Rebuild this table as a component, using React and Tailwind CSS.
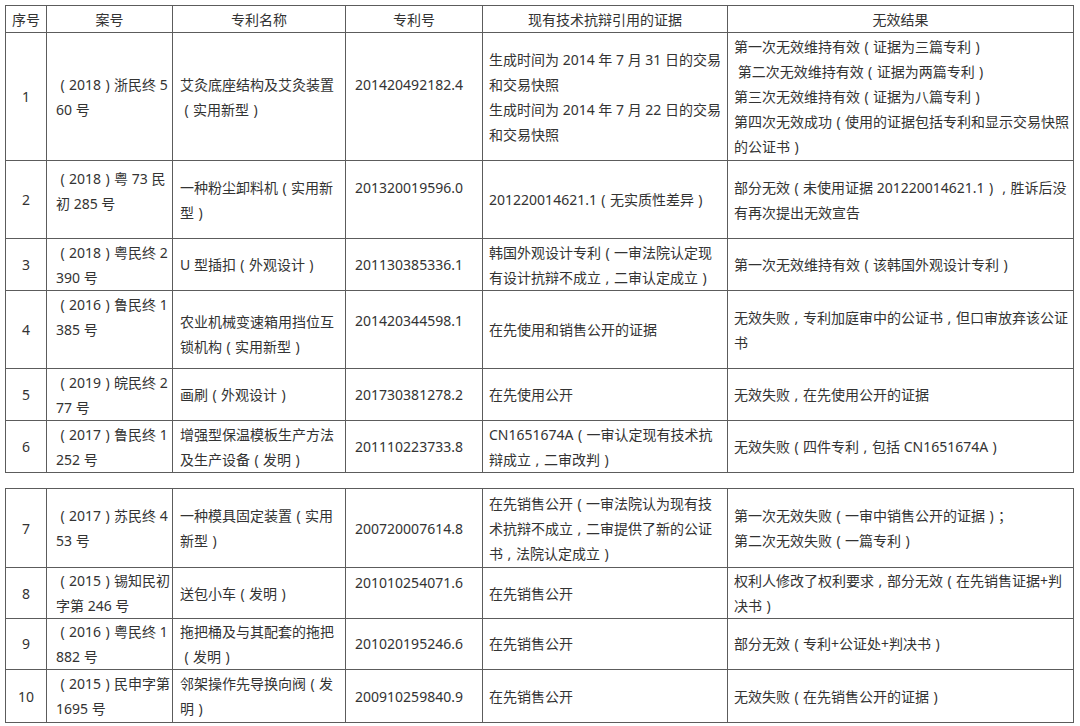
import React from 'react';

// column template shared by header and all rows
const COLS = 'grid grid-cols-[41px_126px_173px_137px_245px_346px]';

// left padding per column
const PAD = ['items-center', 'pl-[9px]', 'pl-[7px]', 'pl-[9px]', 'pl-[6px]', 'pl-[6px]'];

const HEAD = ['序号', '案号', '专利名称', '专利号', '现有技术抗辩引用的证据', '无效结果'];

// each cell: array of lines, or { lines, cls } when the cell sits off-centre
const TOP = [
  {
    h: 'h-[128px]',
    cells: [
      ['1'],
      ['（2018）浙民终 5', '60 号'],
      ['艾灸底座结构及艾灸装置', '（实用新型）'],
      { lines: ['201420492182.4'], cls: 'pb-[24px]' },
      ['生成时间为 2014 年 7 月 31 日的交易', '和交易快照', '生成时间为 2014 年 7 月 22 日的交易', '和交易快照'],
      [
        '第一次无效维持有效（证据为三篇专利）',
        '\u00a0第二次无效维持有效（证据为两篇专利）',
        '第三次无效维持有效（证据为八篇专利）',
        '第四次无效成功（使用的证据包括专利和显示交易快照',
        '的公证书）',
      ],
    ],
  },
  {
    h: 'h-[78px]',
    cells: [
      ['2'],
      { lines: ['（2018）粤 73 民', '初 285 号'], cls: 'pb-[18px]' },
      ['一种粉尘卸料机（实用新', '型）'],
      { lines: ['201320019596.0'], cls: 'pb-[24px]' },
      ['201220014621.1（无实质性差异）'],
      ['部分无效（未使用证据 201220014621.1），胜诉后没', '有再次提出无效宣告'],
    ],
  },
  {
    h: 'h-[52px]',
    cells: [
      ['3'],
      ['（2018）粤民终 2', '390 号'],
      ['U 型插扣（外观设计）'],
      ['201130385336.1'],
      ['韩国外观设计专利（一审法院认定现', '有设计抗辩不成立，二审认定成立）'],
      ['第一次无效维持有效（该韩国外观设计专利）'],
    ],
  },
  {
    h: 'h-[78px]',
    cells: [
      ['4'],
      { lines: ['（2016）鲁民终 1', '385 号'], cls: 'pb-[26px]' },
      { lines: ['农业机械变速箱用挡位互', '锁机构（实用新型）'], cls: 'pt-[8px]' },
      { lines: ['201420344598.1'], cls: 'pb-[18px]' },
      ['在先使用和销售公开的证据'],
      ['无效失败，专利加庭审中的公证书，但口审放弃该公证', '书'],
    ],
  },
  {
    h: 'h-[52px]',
    cells: [
      ['5'],
      ['（2019）皖民终 2', '77 号'],
      ['画刷（外观设计）'],
      ['201730381278.2'],
      ['在先使用公开'],
      ['无效失败，在先使用公开的证据'],
    ],
  },
  {
    h: 'h-[52px]',
    cells: [
      ['6'],
      ['（2017）鲁民终 1', '252 号'],
      ['增强型保温模板生产方法', '及生产设备（发明）'],
      ['201110223733.8'],
      ['CN1651674A（一审认定现有技术抗', '辩成立，二审改判）'],
      ['无效失败（四件专利，包括 CN1651674A）'],
    ],
  },
];

const BOTTOM = [
  {
    h: 'h-[79px]',
    cells: [
      ['7'],
      ['（2017）苏民终 4', '53 号'],
      ['一种模具固定装置（实用', '新型）'],
      ['200720007614.8'],
      ['在先销售公开（一审法院认为现有技', '术抗辩不成立，二审提供了新的公证', '书，法院认定成立）'],
      ['第一次无效失败（一审中销售公开的证据）；', '第二次无效失败（一篇专利）'],
    ],
  },
  {
    h: 'h-[50px]',
    cells: [
      ['8'],
      ['（2015）锡知民初', '字第 246 号'],
      ['送包小车（发明）'],
      { lines: ['201010254071.6'], cls: 'pb-[22px]' },
      ['在先销售公开'],
      ['权利人修改了权利要求，部分无效（在先销售证据+判', '决书）'],
    ],
  },
  {
    h: 'h-[52px]',
    cells: [
      ['9'],
      ['（2016）粤民终 1', '882 号'],
      ['拖把桶及与其配套的拖把', '（发明）'],
      ['201020195246.6'],
      ['在先销售公开'],
      ['部分无效（专利+公证处+判决书）'],
    ],
  },
  {
    h: 'h-[53px]',
    cells: [
      ['10'],
      ['（2015）民申字第', '1695 号'],
      ['邻架操作先导换向阀（发', '明）'],
      ['200910259840.9'],
      ['在先销售公开'],
      ['无效失败（在先销售公开的证据）'],
    ],
  },
];

// full-width punctuation as the source document draws it: glyph centred in its box
const fmt = (text) =>
  Array.from(text).map((ch, i) => {
    if (ch === '（') return <span key={i} className="inline-block w-[13px] text-center">(</span>;
    if (ch === '）') return <span key={i} className="inline-block w-[13px] text-center">)</span>;
    if (ch === '，') return <span key={i} className="inline-block w-[13px] text-center">,</span>;
    return ch;
  });

const Cell = ({ cell, col }) => {
  const lines = Array.isArray(cell) ? cell : cell.lines;
  const extra = Array.isArray(cell) ? '' : cell.cls;
  return (
    <div className={`flex flex-col justify-center border-r border-b border-[#5c5c5c] ${PAD[col]} ${extra}`}>
      {lines.map((l, i) => (
        <div key={i} className="whitespace-nowrap">{fmt(l)}</div>
      ))}
    </div>
  );
};

const Row = ({ row }) => (
  <div className={`${COLS} ${row.h}`}>
    {row.cells.map((c, i) => (
      <Cell key={i} cell={c} col={i} />
    ))}
  </div>
);

export default function App() {
  return (
    <div className="w-[1080px] h-[726px] bg-white pt-[5px] pl-[5px] text-[14px] leading-[25px] text-[#333] font-['Noto_Sans','Noto_Sans_CJK_SC',sans-serif] overflow-hidden">
      {/* first part: header + rows 1-6 */}
      <div className="w-fit border-l border-t border-[#5c5c5c]">
        <div className={`${COLS} h-[27px]`}>
          {HEAD.map((t) => (
            <div key={t} className="flex items-center justify-center border-r border-b border-[#5c5c5c]">
              {t}
            </div>
          ))}
        </div>
        {TOP.map((r, i) => (
          <Row key={i} row={r} />
        ))}
      </div>

      {/* second part after the page break */}
      <div className="w-fit mt-[15px] border-l border-t border-[#5c5c5c]">
        {BOTTOM.map((r, i) => (
          <Row key={i} row={r} />
        ))}
      </div>
    </div>
  );
}
